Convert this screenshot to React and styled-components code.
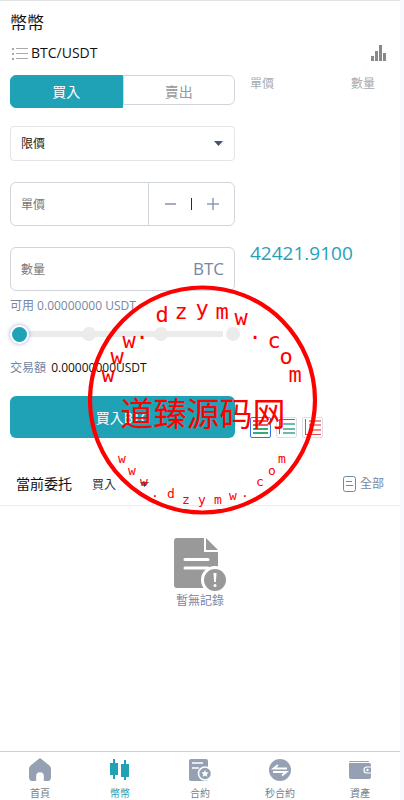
import { useState } from "react";
import styled, { createGlobalStyle } from "styled-components";

const GlobalStyle = createGlobalStyle`
    * {
        box-sizing: border-box;
    }

    body {
        margin: 0;
        padding-right: 4px;
        background: #f8f9fd;
        font-family: "Open Sans", "Noto Sans CJK TC", sans-serif;
        font-size: 12px;
        color: #111;
    }

    button, input, select {
        font-family: inherit;
        margin: 0;
        padding: 0;
        border: 0;
        outline: none;
        background: none;
        border-radius: 0;
    }
`;

const Page = styled.div`
    display: flex;
    flex-direction: column;
    min-height: 100vh;
    position: relative;
    background: #fff;
    border-top: 1px solid #e2e2e2;
`;

const Header = styled.header`
    padding: 9px 11px 0 10px;
`;

const Title = styled.h1`
    margin: 0;
    font-size: 17px;
    line-height: 26px;
    font-weight: 400;
`;

const PairRow = styled.div`
    display: flex;
    align-items: center;
    justify-content: space-between;
    height: 34px;
`;

const IconButton = styled.button`
    display: flex;
    align-items: center;
    gap: 3px;
    padding: 0 2px;
    color: #111;
    font-size: 14px;
    line-height: 20px;
    cursor: pointer;
`;

const Trade = styled.section`
    display: grid;
    grid-template-columns: minmax(0, 9fr) minmax(0, 5fr);
    gap: 15px;
    padding: 5px 25px 0 10px;
`;

const Form = styled.form`
    display: flex;
    flex-direction: column;
`;

const Tabs = styled.div`
    display: flex;
    align-items: flex-start;
    height: 33px;
    margin-bottom: 18px;
`;

const Tab = styled.button`
    flex: 1;
    height: ${(p) => (p.$active ? 33 : 30)}px;
    padding-top: ${(p) => (p.$active ? 0 : 3)}px;
    font-size: 14px;
    line-height: 20px;
    cursor: pointer;
    color: ${(p) => (p.$active ? "#fff" : "#999")};
    background: ${(p) => (p.$active ? "#1fa2b6" : "#fff")};
    border: 1px solid ${(p) => (p.$active ? "#1fa2b6" : "#cfd5db")};

    &:first-child {
        border-radius: 6px 0 0 6px;
    }

    &:last-child {
        border-radius: 0 6px 6px 0;
    }
`;

const SelectBox = styled.label`
    display: flex;
    align-items: center;
    height: 35px;
    padding-right: 11px;
    margin-bottom: 21px;
    border: 1px solid #e4e4e8;
    border-radius: 4px;
`;

const Select = styled.select`
    flex: 1;
    appearance: none;
    height: 33px;
    padding-left: 10px;
    font-size: 12px;
    color: #222;
`;

const Field = styled.div`
    display: flex;
    align-items: center;
    height: 44px;
    margin-bottom: ${(p) => p.$gap}px;
    border: 1px solid #cfd5db;
    border-radius: 6px;
`;

const TextInput = styled.input`
    flex: 1;
    min-width: 0;
    height: 42px;
    padding-left: 10px;
    font-size: 12px;

    &::placeholder {
        color: #777;
        opacity: 1;
    }
`;

const Stepper = styled.div`
    display: flex;
    align-items: center;
    justify-content: space-between;
    width: 86px;
    height: 42px;
    padding: 0 15px;
    border-left: 1px solid #cfd5db;
`;

const StepButton = styled.button`
    display: flex;
    cursor: pointer;
`;

const StepDivider = styled.span`
    width: 1px;
    height: 12px;
    background: #222b40;
`;

const Unit = styled.span`
    padding-right: 10px;
    font-size: 17px;
    line-height: 24px;
    color: #7587a6;
`;

const Amount = styled.p`
    margin: 0;
    font-size: 12px;
    line-height: 20px;
    color: #7587a6;
    white-space: nowrap;

    b {
        margin-left: 2px;
        font-weight: 400;
        color: #111;
    }
`;

const Slider = styled.div`
    position: relative;
    display: flex;
    align-items: center;
    height: 20px;
    margin: 8px 0 14px;
`;

const Track = styled.div`
    flex: 1;
    display: flex;
    align-items: center;
    justify-content: space-between;
    margin: 0 -5px 0 0;
    background: linear-gradient(#ebebeb, #ebebeb) 0 50% / calc(100% - 17px) 6px no-repeat;
`;

const Dot = styled.span`
    width: 14px;
    height: 14px;
    border-radius: 50%;
    background: #ebebeb;
`;

const Range = styled.input`
    position: absolute;
    left: 0;
    top: 0;
    width: 100%;
    height: 20px;
    appearance: none;
    cursor: pointer;

    &::-webkit-slider-thumb {
        appearance: none;
        width: 19px;
        height: 19px;
        border: 2px solid #fff;
        border-radius: 50%;
        background: #1fa2b6;
        box-shadow: 0 0 4px rgba(80, 120, 200, 0.6);
    }
`;

const Submit = styled.button`
    height: 42px;
    margin-top: 18px;
    border-radius: 6px;
    background: #1fa2b6;
    color: #fff;
    font-size: 14px;
    cursor: pointer;
`;

const Book = styled.aside`
    display: flex;
    flex-direction: column;
`;

const BookHead = styled.div`
    display: flex;
    justify-content: space-between;
    font-size: 12px;
    line-height: 18px;
    color: #a5abb1;
`;

const LastPrice = styled.div`
    margin-top: 146px;
    font-size: 19px;
    line-height: 28px;
    color: #1fa2b6;
`;

const DepthModes = styled.div`
    display: flex;
    gap: 5px;
    margin-top: auto;
`;

const DepthButton = styled.button`
    display: flex;
    width: 21px;
    height: 21px;
    border: 1px solid ${(p) => (p.$active ? "#2f74d8" : "#dcdfe8")};
    border-radius: 2px;
    cursor: pointer;
`;

const OrdersBar = styled.div`
    display: flex;
    align-items: center;
    height: 43px;
    margin-top: 25px;
    padding: 0 16px;
    border-bottom: 1px solid #ebedf0;
`;

const OrdersTitle = styled.h2`
    margin: 0 20px 0 0;
    font-size: 14px;
    line-height: 20px;
    font-weight: 400;
`;

const SideSelect = styled.label`
    display: flex;
    align-items: center;
    width: 57px;
    margin-right: auto;

    select {
        flex: 1;
        min-width: 0;
        appearance: none;
        font-size: 12px;
        color: #333;
    }
`;

const AllLink = styled.a`
    display: flex;
    align-items: center;
    gap: 4px;
    font-size: 12px;
    line-height: 18px;
    color: #7587a6;
    text-decoration: none;
`;

const Empty = styled.div`
    flex: 1;
    display: flex;
    flex-direction: column;
    align-items: center;
    padding-top: 32px;
    color: #7587a6;
    font-size: 12px;
    line-height: 18px;
`;

const Nav = styled.nav`
    display: flex;
    height: 49px;
    border-top: 1px solid #cfcfcf;
`;

const NavLink = styled.a`
    flex: 1;
    display: flex;
    flex-direction: column;
    align-items: center;
    padding-top: 6px;
    font-size: 10px;
    line-height: 14px;
    gap: 4px;
    text-decoration: none;
    color: ${(p) => (p.$active ? "#1fa2b6" : "#777f88")};

    svg {
        flex: none;
        color: ${(p) => (p.$active ? "#1fa2b6" : "#95a1b3")};
    }
`;

const Stamp = styled.svg`
    position: absolute;
    left: 50%;
    top: 284px;
    margin-left: -112px;
    pointer-events: none;
    fill: red;
    font-family: "DejaVu Sans Mono", monospace;
    text-anchor: middle;
`;

const upperRing = [
    ["w", 20, 97], ["w", 29, 79], ["w", 41, 63], [".", 54, 54], ["d", 74, 37],
    ["z", 93, 34], ["y", 114, 31], ["m", 134, 34], ["w", 153, 40], [".", 167, 54],
    ["c", 186, 63], ["o", 198, 79], ["m", 207, 97],
];

const lowerRing = [
    ["w", 34, 178], ["w", 44, 190], ["w", 56, 201], [".", 67, 212], ["d", 83, 213],
    ["z", 98, 219], ["y", 114, 219], ["m", 130, 219], ["w", 145, 215], [".", 157, 212],
    ["c", 172, 201], ["o", 184, 190], ["m", 194, 178],
];

function Caret() {
    return (
        <svg width="9" height="5" viewBox="0 0 9 5">
            <path d="M0 0h9L4.5 5z" fill="#435477" />
        </svg>
    );
}

function DepthIcon({ mode }) {
    if (mode === "both") {
        return (
            <svg width="19" height="19" viewBox="0 0 19 19">
                <path d="M2 2h15v2H2zM2 6h15v2H2z" fill="#ee5555" />
                <path d="M2 10h15v2H2zM2 14h15v2H2z" fill="#2fae7c" />
            </svg>
        );
    }
    if (mode === "bids") {
        return (
            <svg width="19" height="19" viewBox="0 0 19 19">
                <path d="M2 1h16v1H3v14H2z" fill="#159a78" />
                <path d="M6 5h12v2H6zM6 10h12v2H6zM6 14h12v2H6z" fill="#6dbbae" />
            </svg>
        );
    }
    return (
        <svg width="19" height="19" viewBox="0 0 19 19">
            <path d="M2 1h1v15h15v1H2z" fill="#ee4444" />
            <path d="M6 2h12v2H6zM6 6h12v2H6zM6 11h12v2H6z" fill="#f38b8b" />
        </svg>
    );
}

const navIcons = {
    home: (
        <path
            d="M11 0 1.6 7.4Q0 8.7 0 10.5V19q0 4 3 4h4.200v-5a3.800 3.800 0 0 1 7.600 0v5H19q3 0 3-4v-8.500q0-1.800-1.600-3.100z"
            fill="currentColor"
        />
    ),
    coin: (
        <path
            d="M1 5h3V1h2v4h3v12H6v4H4v-4H1zM12 6h3V2h2v4h3v13h-3v3h-2v-3h-3z"
            fill="currentColor"
        />
    ),
    contract: (
        <g>
            <path d="M2 1h15q2 0 2 2v18q0 2-2 2H2q-2 0-2-2V3q0-2 2-2z" fill="currentColor" />
            <path d="M3 5h11M3 10h7" stroke="#fff" strokeWidth="1.500" />
            <circle cx="16" cy="15.500" r="6.500" fill="currentColor" stroke="#fff" strokeWidth="1.500" />
            <path d="m16 12 1.100 2.300 2.500.3-1.800 1.700.5 2.500-2.300-1.200-2.300 1.200.5-2.500-1.800-1.700 2.500-.3z" fill="#fff" />
        </g>
    ),
    seconds: (
        <g>
            <circle cx="11" cy="12" r="11" fill="currentColor" />
            <path d="M18 10.500H4.500L9 7M4 14h13.500L13 17.500" fill="none" stroke="#fff" strokeWidth="1.800" />
        </g>
    ),
    assets: (
        <g fill="currentColor">
            <path d="M1 3h18q1 0 1 1H0q0-1 1-1z" />
            <path d="M0 5h20q2 0 2 2v12q0 2-2 2H2q-2 0-2-2z" />
            <path d="M22 9h-4a3 3 0 0 0 0 6h4" fill="none" stroke="#fff" strokeWidth="1.200" />
            <circle cx="18.500" cy="12" r="1.200" fill="#fff" />
        </g>
    ),
};

const navItems = [
    { id: "home", label: "首頁" },
    { id: "coin", label: "幣幣" },
    { id: "contract", label: "合約" },
    { id: "seconds", label: "秒合約" },
    { id: "assets", label: "資產" },
];

function App() {
    const [side, setSide] = useState("buy");
    const [depth, setDepth] = useState("both");
    const [percent, setPercent] = useState(0);

    return (
        <>
            <GlobalStyle />
            <Page>
                <Header>
                    <Title>幣幣</Title>
                    <PairRow>
                        <IconButton type="button">
                            <svg width="16" height="13" viewBox="0 0 16 13">
                                <path d="M0 1h2v2H0zM0 6h2v2H0zM0 11h2v2H0zM4 1h12v1H4zM4 6h12v1H4zM4 11h12v1H4z" fill="#aaa" />
                            </svg>
                            BTC/USDT
                        </IconButton>
                        <IconButton type="button" aria-label="K線">
                            <svg width="17" height="19" viewBox="0 0 17 19">
                                <path d="M1 12h3v5H1zM5 7h3v10H5zM9 1h3v16H9zM13 9h3v8h-3z" fill="#888" />
                            </svg>
                        </IconButton>
                    </PairRow>
                </Header>

                <Trade>
                    <Form onSubmit={(e) => e.preventDefault()}>
                        <Tabs>
                            <Tab type="button" $active={side === "buy"} onClick={() => setSide("buy")}>買入</Tab>
                            <Tab type="button" $active={side === "sell"} onClick={() => setSide("sell")}>賣出</Tab>
                        </Tabs>
                        <SelectBox>
                            <Select aria-label="限價">
                                <option>限價</option>
                            </Select>
                            <Caret />
                        </SelectBox>
                        <Field $gap={21}>
                            <TextInput placeholder="單價" aria-label="單價" />
                            <Stepper>
                                <StepButton type="button" aria-label="-">
                                    <svg width="12" height="12" viewBox="0 0 12 12">
                                        <path d="M1 5h11v2H1z" fill="#a3acc3" />
                                    </svg>
                                </StepButton>
                                <StepDivider />
                                <StepButton type="button" aria-label="+">
                                    <svg width="12" height="12" viewBox="0 0 12 12">
                                        <path d="M0 6h12M6 0v12" stroke="#8c99b8" strokeWidth="1.500" />
                                    </svg>
                                </StepButton>
                            </Stepper>
                        </Field>
                        <Field $gap={5}>
                            <TextInput placeholder="數量" aria-label="數量" />
                            <Unit>BTC</Unit>
                        </Field>
                        <Amount>可用 0.00000000 USDT</Amount>
                        <Slider>
                            <Track>
                                <Dot />
                                <Dot />
                                <Dot />
                                <Dot />
                            </Track>
                            <Range
                                type="range"
                                min="0"
                                max="100"
                                aria-label="數量"
                                value={percent}
                                onChange={(e) => setPercent(Number(e.target.value))}
                            />
                        </Slider>
                        <Amount>交易額 <b>0.00000000USDT</b></Amount>
                        <Submit type="submit">買入BTC</Submit>
                    </Form>

                    <Book>
                        <BookHead>
                            <span>單價</span>
                            <span>數量</span>
                        </BookHead>
                        <LastPrice>42421.9100</LastPrice>
                        <DepthModes>
                            {["both", "bids", "asks"].map((mode) => (
                                <DepthButton
                                    key={mode}
                                    type="button"
                                    aria-label={mode}
                                    $active={depth === mode}
                                    onClick={() => setDepth(mode)}
                                >
                                    <DepthIcon mode={mode} />
                                </DepthButton>
                            ))}
                        </DepthModes>
                    </Book>
                </Trade>

                <OrdersBar>
                    <OrdersTitle>當前委托</OrdersTitle>
                    <SideSelect>
                        <select aria-label="買入">
                            <option>買入</option>
                        </select>
                        <Caret />
                    </SideSelect>
                    <AllLink href="#all">
                        <svg width="13" height="16" viewBox="0 0 13 16" fill="none" stroke="#7587a6">
                            <rect x=".5" y=".5" width="12" height="15" rx="2" />
                            <path d="M3 5.500h6M3 9.500h7" />
                        </svg>
                        全部
                    </AllLink>
                </OrdersBar>

                <Empty>
                    <svg width="54" height="54" viewBox="0 0 54 54">
                        <path d="M4 0h27v14h14v33q0 3-3 3H4q-3 0-3-3V3q0-3 3-3z" fill="#999" />
                        <path d="M33 0l12 12H33z" fill="#999" />
                        <path d="M12 21.500h23M12 30h23" stroke="#fff" strokeWidth="3" strokeLinecap="round" />
                        <circle cx="42" cy="42" r="12.500" fill="#999" stroke="#fff" strokeWidth="3" />
                        <path d="M40.500 35h3l-.6 9h-1.800z" fill="#fff" />
                        <circle cx="42" cy="47.500" r="1.500" fill="#fff" />
                    </svg>
                    暫無記錄
                </Empty>

                <Nav>
                    {navItems.map((item) => (
                        <NavLink key={item.id} href={`#${item.id}`} $active={item.id === "coin"}>
                            <svg width="22" height="24" viewBox="0 0 22 24">{navIcons[item.id]}</svg>
                            {item.label}
                        </NavLink>
                    ))}
                </Nav>

                <Stamp width="230" height="230" viewBox="0 0 230 230">
                    <circle cx="114.500" cy="115" r="112.500" fill="none" stroke="red" strokeWidth="4.200" />
                    {upperRing.map(([char, x, y], i) => (
                        <text key={i} x={x} y={y} fontSize="22">{char}</text>
                    ))}
                    <text x="115" y="141" fontSize="33" fontFamily="'Noto Sans CJK SC', sans-serif">道臻源码网</text>
                    {lowerRing.map(([char, x, y], i) => (
                        <text key={i} x={x} y={y} fontSize="13">{char}</text>
                    ))}
                </Stamp>
            </Page>
        </>
    );
}

export default App;
